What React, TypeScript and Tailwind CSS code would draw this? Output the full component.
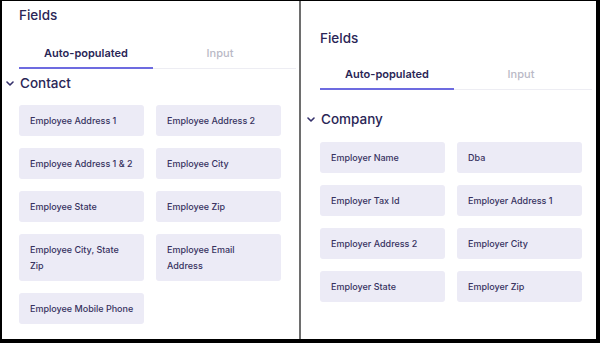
import React from 'react'

type PanelProps = {
  section: string
  fields: string[][]
  padX: string
  fieldsTop: string
  tabsTop: string
  headerTop: string
  cardsTop: string
  padRight: string
}

const contactFields = [
  ['Employee Address 1'],
  ['Employee Address 2'],
  ['Employee Address 1 & 2'],
  ['Employee City'],
  ['Employee State'],
  ['Employee Zip'],
  ['Employee City, State', 'Zip'],
  ['Employee Email', 'Address'],
  ['Employee Mobile Phone'],
]

const companyFields = [
  ['Employer Name'],
  ['Dba'],
  ['Employer Tax Id'],
  ['Employer Address 1'],
  ['Employer Address 2'],
  ['Employer City'],
  ['Employer State'],
  ['Employer Zip'],
]

function Chevron() {
  return (
    <svg width="8" height="5" viewBox="0 0 8 5" fill="none" className="shrink-0">
      <polyline points="1,1 4,4 7,1" stroke="#35316b" strokeWidth="1.6" strokeLinecap="round" strokeLinejoin="round" />
    </svg>
  )
}

function FieldsPanel({ section, fields, padX, fieldsTop, tabsTop, headerTop, cardsTop, padRight }: PanelProps) {
  return (
    <div className={`h-full overflow-hidden bg-white ${padX} ${padRight}`}>
      <div className={`text-[13.5px] leading-5 font-medium text-[#2a2656] ${fieldsTop}`}>Fields</div>

      {/* tabs */}
      <div className={`flex border-b border-[#ededf3] ${tabsTop}`}>
        <div className="w-[134px] pb-[6px] text-center text-[11px] leading-4 font-semibold text-[#2a2656] border-b-2 border-[#6d6be0] -mb-px">
          Auto-populated
        </div>
        <div className="w-[134px] pb-[7px] text-center text-[11px] leading-4 font-medium text-[#b9b9c6]">
          Input
        </div>
      </div>

      <div className={`flex items-center gap-[6px] -ml-[13px] ${headerTop}`}>
        <Chevron />
        <span className="text-[13.5px] leading-5 font-medium text-[#2a2656]">{section}</span>
      </div>

      <div className={`grid grid-cols-[125px_125px] gap-3 ${cardsTop}`}>
        {fields.map((lines, i) => (
          <div
            key={i}
            className="rounded-[3px] bg-[#ecebf6] px-[11px] py-[7.5px] text-[9px] leading-4 font-medium text-[#37325f] whitespace-nowrap"
          >
            {lines.map((l, j) => (
              <div key={j}>{l}</div>
            ))}
          </div>
        ))}
      </div>
    </div>
  )
}

export default function App() {
  return (
    <div
      className="w-[600px] h-[343px] bg-black pt-px pl-[2px] pr-[4px] pb-[4px]"
      style={{ fontFamily: 'Inter, "Noto Sans", sans-serif' }}
    >
      <div className="flex h-full">
        <div className="w-[297px] h-full">
          <FieldsPanel
            section="Contact"
            fields={contactFields}
            padX="pl-[17px]"
            padRight="pr-[3px]"
            fieldsTop="pt-[4px]"
            tabsTop="mt-[20px]"
            headerTop="mt-[4px]"
            cardsTop="mt-[12px]"
          />
        </div>
        <div className="w-[2px] h-full bg-[#6e6e6e]" />
        <div className="flex-1 h-full">
          <FieldsPanel
            section="Company"
            fields={companyFields}
            padX="pl-[19px]"
            padRight="pr-[4px]"
            fieldsTop="pt-[27px]"
            tabsTop="mt-[18px]"
            headerTop="mt-[19px]"
            cardsTop="mt-[13px]"
          />
        </div>
      </div>
    </div>
  )
}
